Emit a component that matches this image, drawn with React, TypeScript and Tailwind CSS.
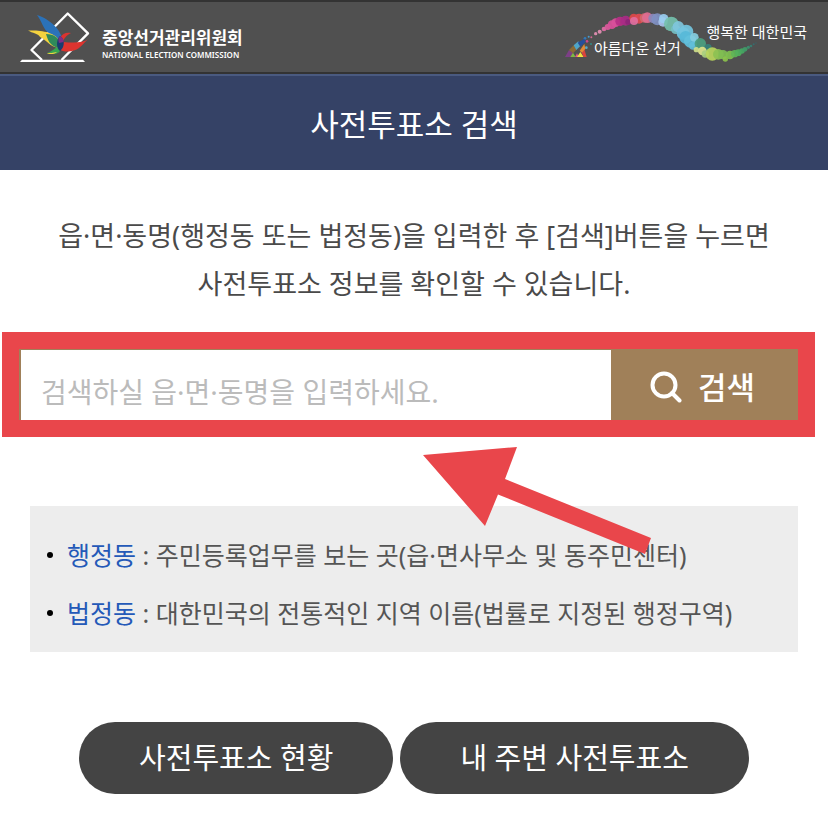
import type { FormEvent } from "react"

// x, y, radius, colour of every bubble in the slogan ribbon
const bubbles: [number, number, number, string][] = [
    [108, 115, 4, "#2f7fc4"], [119, 110, 3, "#4aa3d8"], [127, 112, 3, "#e06a9a"], [114, 124, 4, "#d8488f"], [126, 132, 3, "#2f8f8a"], [112, 143, 4, "#58b4d6"],
    [140, 101, 5, "#e58fb4"], [152, 95, 6, "#e58fb4"], [165, 87, 7, "#df6fa6"], [176, 81, 9, "#dc5a9c"], [189, 74, 13, "#d94f9a"],
    [200, 68, 13, "#d94f9a"], [213, 64, 14, "#b62f86"], [230, 62, 15, "#a92a86"], [238, 66, 9, "#8b2677"], [254, 54, 13, "#e04848"],
    [270, 56, 15, "#e04a50"], [286, 54, 14, "#cf6a6c"], [255, 63, 12, "#e06f9f"], [295, 53, 16, "#df6c93"], [312, 55, 14, "#8b86b8"],
    [325, 58, 18, "#7f90c2"], [342, 66, 14, "#a7c2ea"], [344, 56, 14, "#9acdf0"], [367, 72, 22, "#74c0ad"], [380, 88, 14, "#74bfc4"], [388, 80, 17, "#7fc6dc"],
    [402, 100, 19, "#6fc3df"], [412, 95, 21, "#74c6e0"], [410, 112, 19, "#57b9d8"], [424, 124, 19, "#62c0dc"], [436, 112, 13, "#86cde0"], [432, 137, 12, "#62bfd9"],
    [454, 131, 17, "#4c9f80"], [477, 143, 11, "#37817a"], [442, 149, 8, "#cfe08a"], [460, 153, 13, "#dde48c"], [469, 162, 11, "#a9cf7f"],
    [490, 162, 20, "#b9d55c"], [508, 163, 16, "#8cc153"], [522, 164, 14, "#7fbd52"], [529, 177, 8, "#8cc24c"], [543, 165, 13, "#7fc04f"],
    [557, 161, 11, "#5fb557"], [568, 158, 10, "#52b05c"], [579, 153, 8, "#46a862"], [588, 148, 7, "#409c68"], [598, 142, 5, "#3c8f6e"],
    [606, 138, 4, "#377f72"], [614, 133, 3, "#346f70"], [621, 129, 2, "#33686c"],
]

function CommissionLogo() {
    return (
        <svg className="h-[54px] w-[70px] shrink-0" viewBox="20 10 70 54" aria-hidden="true">
            <path d="M42 60L31.5 50L67.7 13.5L88 33.3L61.5 60" fill="none" stroke="#fff" strokeWidth="2.4" strokeLinejoin="round" />
            <path d="M22 59.7H83L85 62H20Z" fill="#fff" />
            <path d="M37 15C49 19 62 29 63 43C57 41 55 37 50 34C43 30 42 21 37 15Z" fill="#2b72b9" />
            <path d="M28 30.5C38 30 56 31 60 42C60 45 59 47 58 48C49 46 48 41 40 37C39 34 32 33 28 30.5Z" fill="#f4d23f" />
            <path d="M46 34C54 34 59 38 60 43C60 46 59 47 58 48C49 45 48 40 46 34Z" fill="#2f8a5a" />
            <path d="M71 33C62 31 57 39 59 49C64 53 74 52 79 48C84 44 85 41 89 39C82 43 75 43 63 42C64 38 66 36 71 33Z" fill="#dc342f" />
            <path d="M47 53C52 52 54 48 60 46C62 51 58 54 54 54C51 54 49 54 47 53Z" fill="#37a650" />
            <path d="M47 53C50 53 53 53 57 52C56 54 49 55 47 53Z" fill="#f4d23f" />
            <path d="M60 36C65 39 65 47 60 51C56 48 56 40 60 36Z" fill="#193c70" />
            <path d="M60 36C63 38 64 40 63.5 42L59 43C58 40 58 38 60 36Z" fill="#7d2f86" />
        </svg>
    )
}

function Slogan() {
    return (
        <div className="relative h-[54px] w-[242px] shrink-0 text-[15px] leading-5 text-white">
            <svg className="h-full w-full" viewBox="48 30 726 162" aria-hidden="true">
                {bubbles.map(([x, y, r, fill], i) => (
                    <circle key={i} cx={x} cy={y} r={r} fill={fill} fillOpacity="0.92" />
                ))}
                <path d="M48 171L60 150L72 158L66 171Z" fill="#7d3f86" />
                <path d="M60 150L74 136L84 148L72 160Z" fill="#8a6a35" />
                <path d="M74 136L88 124L94 138L82 150Z" fill="#4fa5c8" />
                <path d="M86 128L106 116L110 126L94 140Z" fill="#264f9c" />
                <path d="M64 171L72 158L80 171Z" fill="#7fb842" />
                <path d="M78 171L84 160L90 171Z" fill="#e0578a" />
                <path d="M84 171L94 156L104 171Z" fill="#f0e040" />
                <path d="M98 158L106 148L113 171H104Z" fill="#d9433c" />
                <path d="M92 152L106 132L109 146L99 158Z" fill="#e28a35" />
            </svg>
            <span className="absolute bottom-1.5 left-[29px] whitespace-nowrap">아름다운 선거</span>
            <span className="absolute right-0 top-3 whitespace-nowrap">행복한 대한민국</span>
        </div>
    )
}

export default function App() {
    const onSubmit = (e: FormEvent) => e.preventDefault()

    return (
        <div className="min-h-screen bg-white font-['Noto_Sans','Noto_Sans_CJK_KR',sans-serif]">
            <header className="flex items-center justify-between border-y-2 border-[#333] bg-[#505050] py-2 pl-5 pr-[21px]">
                <a href="#" className="flex items-center gap-3 text-white">
                    <CommissionLogo />
                    <span className="flex flex-col pt-3.5">
                        <span className="text-[17px] font-bold leading-[22px]">중앙선거관리위원회</span>
                        <span className="whitespace-nowrap text-[8px] font-semibold leading-3">NATIONAL ELECTION COMMISSION</span>
                    </span>
                </a>
                <Slogan />
            </header>

            <h1 className="border-t-2 border-[#4a5a80] bg-[#354266] pb-[22px] pt-6 text-center text-[31px] leading-[48px] text-white">사전투표소 검색</h1>

            <main className="pb-8">
                <p className="pb-6 pt-[42px] text-center text-[27px] leading-[48px] text-[#4a4a4a]">
                    읍·면·동명(행정동 또는 법정동)을 입력한 후 [검색]버튼을 누르면
                    <br />
                    사전투표소 정보를 확인할 수 있습니다.
                </p>

                <div className="relative ml-0.5 mr-[13px]">
                    <form onSubmit={onSubmit} className="flex border-[17px] border-[#e9464b]">
                        <input
                            type="text"
                            aria-label="읍·면·동명"
                            placeholder="검색하실 읍·면·동명을 입력하세요."
                            className="h-[71px] min-w-0 flex-1 border-l-2 border-t border-[#a08059] bg-white pl-5 pt-3.5 text-[28px] text-[#444] outline-none placeholder:text-[#bbb]"
                        />
                        <button type="submit" className="flex w-[187px] items-center justify-center gap-4 bg-[#a08059] pb-1 pr-1 pt-2 text-[31px] font-medium leading-10 text-white">
                            <svg className="h-8 w-8" viewBox="0 0 32 32" fill="none" stroke="currentColor" strokeWidth="4" aria-hidden="true">
                                <circle cx="14" cy="14" r="11.5" />
                                <path d="M22 22L29.5 29.5" strokeLinecap="round" />
                            </svg>
                            검색
                        </button>
                    </form>
                    <svg className="pointer-events-none absolute left-[calc(50%+14px)] top-full mt-2.5 h-[107px] w-[229px]" viewBox="0 0 229 107" aria-hidden="true">
                        <path d="M0 8L94 0L82 32L228 91L222 107L75 47.500L62 79Z" fill="#e9464b" />
                    </svg>
                </div>

                <ul className="mx-[30px] mt-[69px] bg-[#ededed] px-[17px] pb-2.5 pt-5 text-[25px] leading-[58px] text-[#555]">
                    <li className="flex items-center gap-3.5">
                        <span className="h-1.5 w-1.5 shrink-0 rounded-full bg-black" />
                        <span><span className="text-[#2459b8]">행정동</span> : 주민등록업무를 보는 곳(읍·면사무소 및 동주민센터)</span>
                    </li>
                    <li className="flex items-center gap-3.5">
                        <span className="h-1.5 w-1.5 shrink-0 rounded-full bg-black" />
                        <span><span className="text-[#2459b8]">법정동</span> : 대한민국의 전통적인 지역 이름(법률로 지정된 행정구역)</span>
                    </li>
                </ul>

                <div className="mt-[70px] flex flex-wrap justify-center gap-[7px] text-[29px] leading-[72px] text-white">
                    <button type="button" className="rounded-full bg-[#444] px-[60px]">사전투표소 현황</button>
                    <button type="button" className="rounded-full bg-[#444] px-[60px]">내 주변 사전투표소</button>
                </div>
            </main>
        </div>
    )
}
